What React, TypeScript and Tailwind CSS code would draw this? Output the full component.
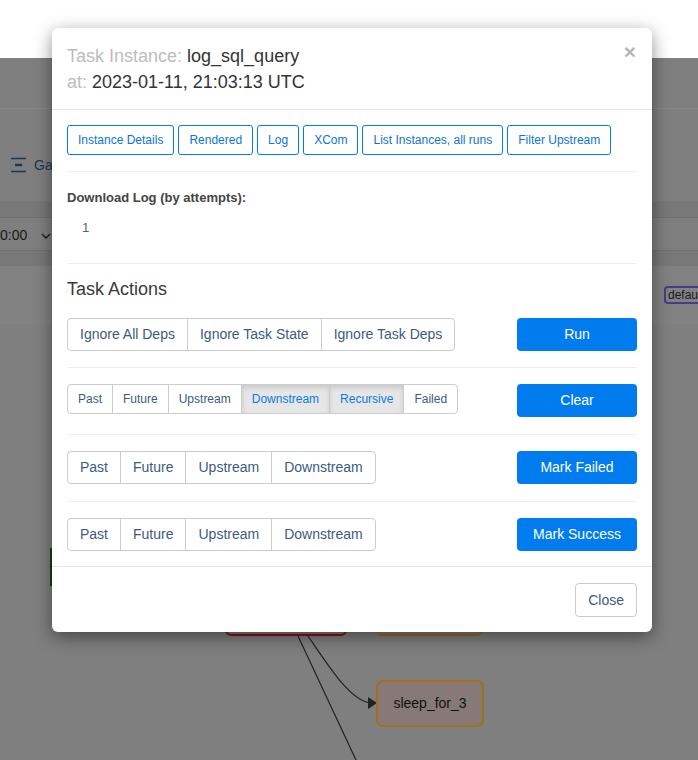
import React from 'react';

const topButtons = ['Instance Details', 'Rendered', 'Log', 'XCom', 'List Instances, all runs', 'Filter Upstream'];

type Opt = { label: string; active?: boolean };

const ButtonGroup: React.FC<{ items: Opt[]; small?: boolean }> = ({ items, small }) => (
  <div className="flex">
    {items.map((it, i) => (
      <span
        key={it.label}
        className={[
          'border border-[#ccc] whitespace-nowrap',
          small ? 'px-[10px] py-[5px] text-[12px] leading-[18px]' : 'px-[12px] py-[7px] text-[14px] leading-[17px]',
          i > 0 ? '-ml-px' : '',
          i === 0 ? 'rounded-l-[4px]' : '',
          i === items.length - 1 ? 'rounded-r-[4px]' : '',
          it.active
            ? 'bg-[#e6e6e6] border-[#adadad] text-[#0b7be6] shadow-[inset_0_3px_5px_rgba(0,0,0,0.125)]'
            : 'bg-white text-[#3c5b80]',
        ].join(' ')}
      >
        {it.label}
      </span>
    ))}
  </div>
);

const PrimaryButton: React.FC<{ label: string }> = ({ label }) => (
  <span className="w-[120px] rounded-[4px] bg-[#017cee] py-[7px] text-center text-[14px] leading-[19px] text-white">
    {label}
  </span>
);

const Hr = () => <div className="h-px bg-[#eeeeee]" />;

const ActionRow: React.FC<{ items: Opt[]; small?: boolean; action: string }> = ({ items, small, action }) => (
  <div className="flex items-start justify-between">
    <ButtonGroup items={items} small={small} />
    <PrimaryButton label={action} />
  </div>
);

const mark: Opt[] = [{ label: 'Past' }, { label: 'Future' }, { label: 'Upstream' }, { label: 'Downstream' }];

export default function App() {
  return (
    <div className="relative h-[760px] w-full overflow-hidden bg-[#7f7f7f] font-['Liberation_Sans',Arial,sans-serif]">
      {/* page behind the dialog, dimmed */}
      <div className="h-[58px] bg-white" />
      <div className="h-[50px]" />
      <div className="h-px bg-[#8a8a8a]" />
      <div className="flex items-center gap-[7px] pl-[10px] pt-[46px] pb-[26px] text-[14px] leading-[20px] text-[#1d3556]">
        <svg width="17" height="16" viewBox="0 0 17 16" fill="none" stroke="#1d3556">
          <path d="M1 1.5h15" strokeWidth="1.5" />
          <path d="M5 8h7" strokeWidth="2.5" />
          <path d="M1 14.5h15" strokeWidth="1.5" />
        </svg>
        <span>Ga</span>
      </div>
      <div className="h-[16px] bg-[#787878]" />
      <div className="flex h-[34px] items-center gap-[14px] border-y border-[#707070] pt-[3px] text-[14px] text-[#1a1a1a]">
        <span>0:00</span>
        <svg width="10" height="6" viewBox="0 0 10 6" fill="none" stroke="#1a1a1a" strokeWidth="1.4">
          <path d="M1 1l4 4 4-4" />
        </svg>
      </div>
      <div className="h-[15px] bg-[#787878]" />
      <div className="flex h-[58px] items-center justify-end bg-[#828282]">
        <span className="-mr-[10px] rounded-[4px] border-2 border-[#4a3a8c] px-[2px] text-[12px] leading-[14px] text-[#1a1a1a]">
          default
        </span>
      </div>

      {/* graph canvas */}
      <div className="absolute left-[50px] top-[548px] h-[38px] w-[3px] bg-[#1f3a1f]" />
      <div className="absolute left-[225px] top-[596px] h-[40px] w-[122px] rounded-[6px] border-2 border-[#8c1111] bg-[#867878]" />
      <div className="absolute left-[376px] top-[596px] h-[40px] w-[107px] rounded-[6px] border-2 border-[#9c6c14] bg-[#867a78]" />
      <svg className="absolute left-0 top-0" width="698" height="760">
        <path d="M298 636 L356 760" stroke="#222" strokeWidth="1.2" fill="none" />
        <path d="M308 636 C330 668 350 700 370 703" stroke="#222" strokeWidth="1.2" fill="none" />
        <path d="M368 697 L377 703 L368 709 Z" fill="#222" />
      </svg>
      <div className="absolute left-[376px] top-[680px] flex h-[47px] w-[108px] items-center justify-center rounded-[7px] border-2 border-[#a0701b] bg-[#867977] text-[14px] text-[#111]">
        sleep_for_3
      </div>

      {/* dialog */}
      <div className="absolute left-[52px] top-[28px] w-[600px] rounded-[6px] bg-white shadow-[0_5px_18px_rgba(0,0,0,0.45)]">
        <div className="relative border-b border-[#e5e5e5] px-[15px] pt-[15px] pb-[14px] text-[18px] leading-[26px]">
          <div>
            <span className="text-[#bdbdbd]">Task Instance: </span>
            <span className="text-[#333]">log_sql_query</span>
          </div>
          <div>
            <span className="text-[#bdbdbd]">at: </span>
            <span className="text-[#333]">2023-01-11, 21:03:13 UTC</span>
          </div>
          <span className="absolute right-[16px] top-[11px] text-[21px] font-bold leading-[26px] text-[#b5b5b5]">×</span>
        </div>

        <div className="px-[15px] pt-[15px] pb-[15px]">
          <div className="flex gap-[4px]">
            {topButtons.map((b) => (
              <span
                key={b}
                className="rounded-[3px] border border-[#017cee] px-[10px] py-[5px] text-[12px] leading-[18px] text-[#0b75d8]"
              >
                {b}
              </span>
            ))}
          </div>
          <div className="mt-[16px]">
            <Hr />
          </div>
          <div className="pt-[16px] text-[13px] font-bold leading-[20px] text-[#444]">Download Log (by attempts):</div>
          <div className="pt-[10px] pl-[15px] text-[13px] leading-[20px] text-[#3f6690]">1</div>
          <div className="mt-[25px]">
            <Hr />
          </div>
          <div className="pt-[12px] pb-[16px] text-[18px] font-medium leading-[26px] text-[#3a3a3a]">Task Actions</div>

          <ActionRow
            items={[{ label: 'Ignore All Deps' }, { label: 'Ignore Task State' }, { label: 'Ignore Task Deps' }]}
            action="Run"
          />
          <div className="mt-[16px] mb-[16px]">
            <Hr />
          </div>
          <ActionRow
            small
            items={[
              { label: 'Past' },
              { label: 'Future' },
              { label: 'Upstream' },
              { label: 'Downstream', active: true },
              { label: 'Recursive', active: true },
              { label: 'Failed' },
            ]}
            action="Clear"
          />
          <div className="mt-[17px] mb-[16px]">
            <Hr />
          </div>
          <ActionRow items={mark} action="Mark Failed" />
          <div className="mt-[17px] mb-[16px]">
            <Hr />
          </div>
          <ActionRow items={mark} action="Mark Success" />
        </div>

        <div className="flex justify-end border-t border-[#e5e5e5] px-[15px] pt-[16px] pb-[15px]">
          <span className="rounded-[4px] border border-[#ccc] px-[12px] py-[6px] text-[14px] leading-[20px] text-[#3c5b80]">
            Close
          </span>
        </div>
      </div>
    </div>
  );
}
